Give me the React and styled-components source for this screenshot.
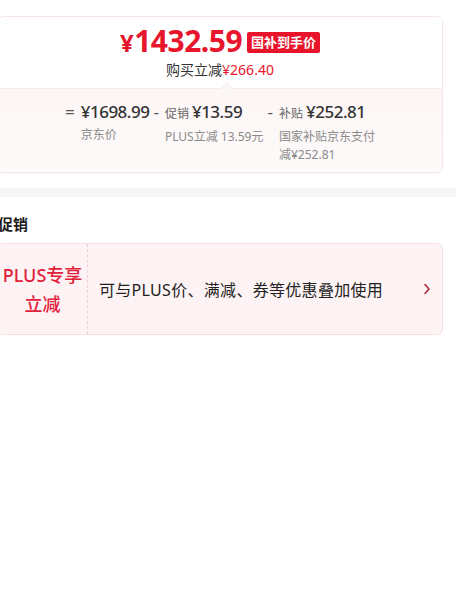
import React from 'react';
import styled, { createGlobalStyle } from 'styled-components';

const GlobalStyle = createGlobalStyle`
  body {
    margin: 0;
    background: #fff;
    font-family: "Noto Sans", "Noto Sans CJK SC", sans-serif;
    color: #1a1a1a;
  }
`;

const Page = styled.div`
  width: 446px;
  margin-left: -3px;
  padding-top: 16px;
`;

const PriceCard = styled.div`
  border: 1px solid #f6e6e6;
  border-radius: 7px;
  overflow: hidden;
  box-shadow: 0 1px 2px rgba(0, 0, 0, 0.04);
`;

const Top = styled.div`
  position: relative;
  height: 71px;
  display: flex;
  flex-direction: column;
  align-items: center;
  background: #fff;
  border-bottom: 1px solid #f6ecec;

  &::after {
    content: '';
    position: absolute;
    left: 224px;
    bottom: -5px;
    width: 8px;
    height: 8px;
    background: #fdf8f8;
    border-left: 1px solid #f6ecec;
    border-top: 1px solid #f6ecec;
    transform: rotate(45deg);
  }
`;

const PriceRow = styled.div`
  display: flex;
  align-items: center;
  gap: 5px;
  margin-top: 8px;
  height: 34px;
`;

const BigPrice = styled.div`
  color: #e8162c;
  font-weight: 700;
  font-size: 30px;
  letter-spacing: -0.5px;
  line-height: 34px;

  span {
    font-size: 24px;
    margin-right: 1px;
  }
`;

const Badge = styled.div`
  background: #e8142a;
  color: #fff;
  font-size: 13px;
  font-weight: 700;
  line-height: 21px;
  padding: 0 4px;
  border-radius: 2px;
  margin-top: 1px;
`;

const Saving = styled.div`
  font-size: 14px;
  line-height: 20px;
  color: #333;
  margin-top: 1px;

  em {
    font-style: normal;
    color: #e8162c;
  }
`;

const Breakdown = styled.div`
  height: 83px;
  background: linear-gradient(#fdf6f6, #fdfafa);
  display: flex;
  justify-content: center;
  gap: 4px;
  padding-top: 10px;
  box-sizing: border-box;
`;

const Item = styled.div`
  display: flex;
  gap: 6px;
`;

const Op = styled.div`
  font-size: 17px;
  line-height: 26px;
  color: #555;
`;

const ItemBody = styled.div`
  display: flex;
  flex-direction: column;
  min-width: ${p => p.$w}px;
`;

const Amount = styled.div`
  display: flex;
  align-items: baseline;
  gap: 3px;
  font-size: 17px;
  letter-spacing: -0.5px;
  line-height: 26px;
  color: #333;
  font-weight: 500;

  small {
    font-size: 12px;
    font-weight: 400;
    letter-spacing: 0;
    color: #666;
  }
`;

const Sub = styled.div`
  font-size: 12px;
  line-height: 18px;
  color: #8a8a8a;
  margin-top: 1px;
`;

const Band = styled.div`
  height: 9px;
  background: #f6f6f8;
  margin: 15px 0 0 -10px;
  width: 480px;
`;

const Title = styled.div`
  font-size: 15px;
  font-weight: 700;
  line-height: 20px;
  margin-top: 17px;
  padding-left: 1px;
  color: #1a1a1a;
`;

const PromoCard = styled.div`
  margin-top: 9px;
  height: 90px;
  display: flex;
  border: 1px solid #f4dfe1;
  border-radius: 6px;
  background: #fdf3f4;
`;

const PromoTag = styled.div`
  width: 89px;
  border-right: 1px dashed #ecd0d4;
  display: flex;
  flex-direction: column;
  align-items: center;
  justify-content: center;
  color: #e3203a;
  font-size: 18px;
  font-weight: 500;
  line-height: 29px;
  padding-top: 2px;
`;

const PromoText = styled.div`
  flex: 1;
  display: flex;
  align-items: center;
  padding-left: 11px;
  padding-right: 11px;
  font-size: 16px;
  letter-spacing: 0.3px;
  color: #222;
`;

const Chevron = styled.svg`
  margin-left: auto;
`;

export default function App() {
  return (
    <Page>
      <GlobalStyle />
      <PriceCard>
        <Top>
          <PriceRow>
            <BigPrice><span>¥</span>1432.59</BigPrice>
            <Badge>国补到手价</Badge>
          </PriceRow>
          <Saving>购买立减<em>¥266.40</em></Saving>
        </Top>
        <Breakdown>
          <Item>
            <Op>=</Op>
            <ItemBody $w={68}>
              <Amount>¥1698.99</Amount>
              <Sub>京东价</Sub>
            </ItemBody>
          </Item>
          <Item>
            <Op>-</Op>
            <ItemBody $w={96}>
              <Amount><small>促销</small>¥13.59</Amount>
              <Sub>PLUS立减 13.59元</Sub>
            </ItemBody>
          </Item>
          <Item>
            <Op>-</Op>
            <ItemBody $w={96}>
              <Amount><small>补贴</small>¥252.81</Amount>
              <Sub>国家补贴京东支付<br />减¥252.81</Sub>
            </ItemBody>
          </Item>
        </Breakdown>
      </PriceCard>
      <Band />
      <Title>促销</Title>
      <PromoCard>
        <PromoTag>
          <div>PLUS专享</div>
          <div>立减</div>
        </PromoTag>
        <PromoText>
          可与PLUS价、满减、券等优惠叠加使用
          <Chevron width="8" height="12" viewBox="0 0 8 12">
            <path d="M2 1.5 L6 6 L2 10.5" fill="none" stroke="#b2283c" strokeWidth="1.6" strokeLinecap="round" strokeLinejoin="round" />
          </Chevron>
        </PromoText>
      </PromoCard>
    </Page>
  );
}
